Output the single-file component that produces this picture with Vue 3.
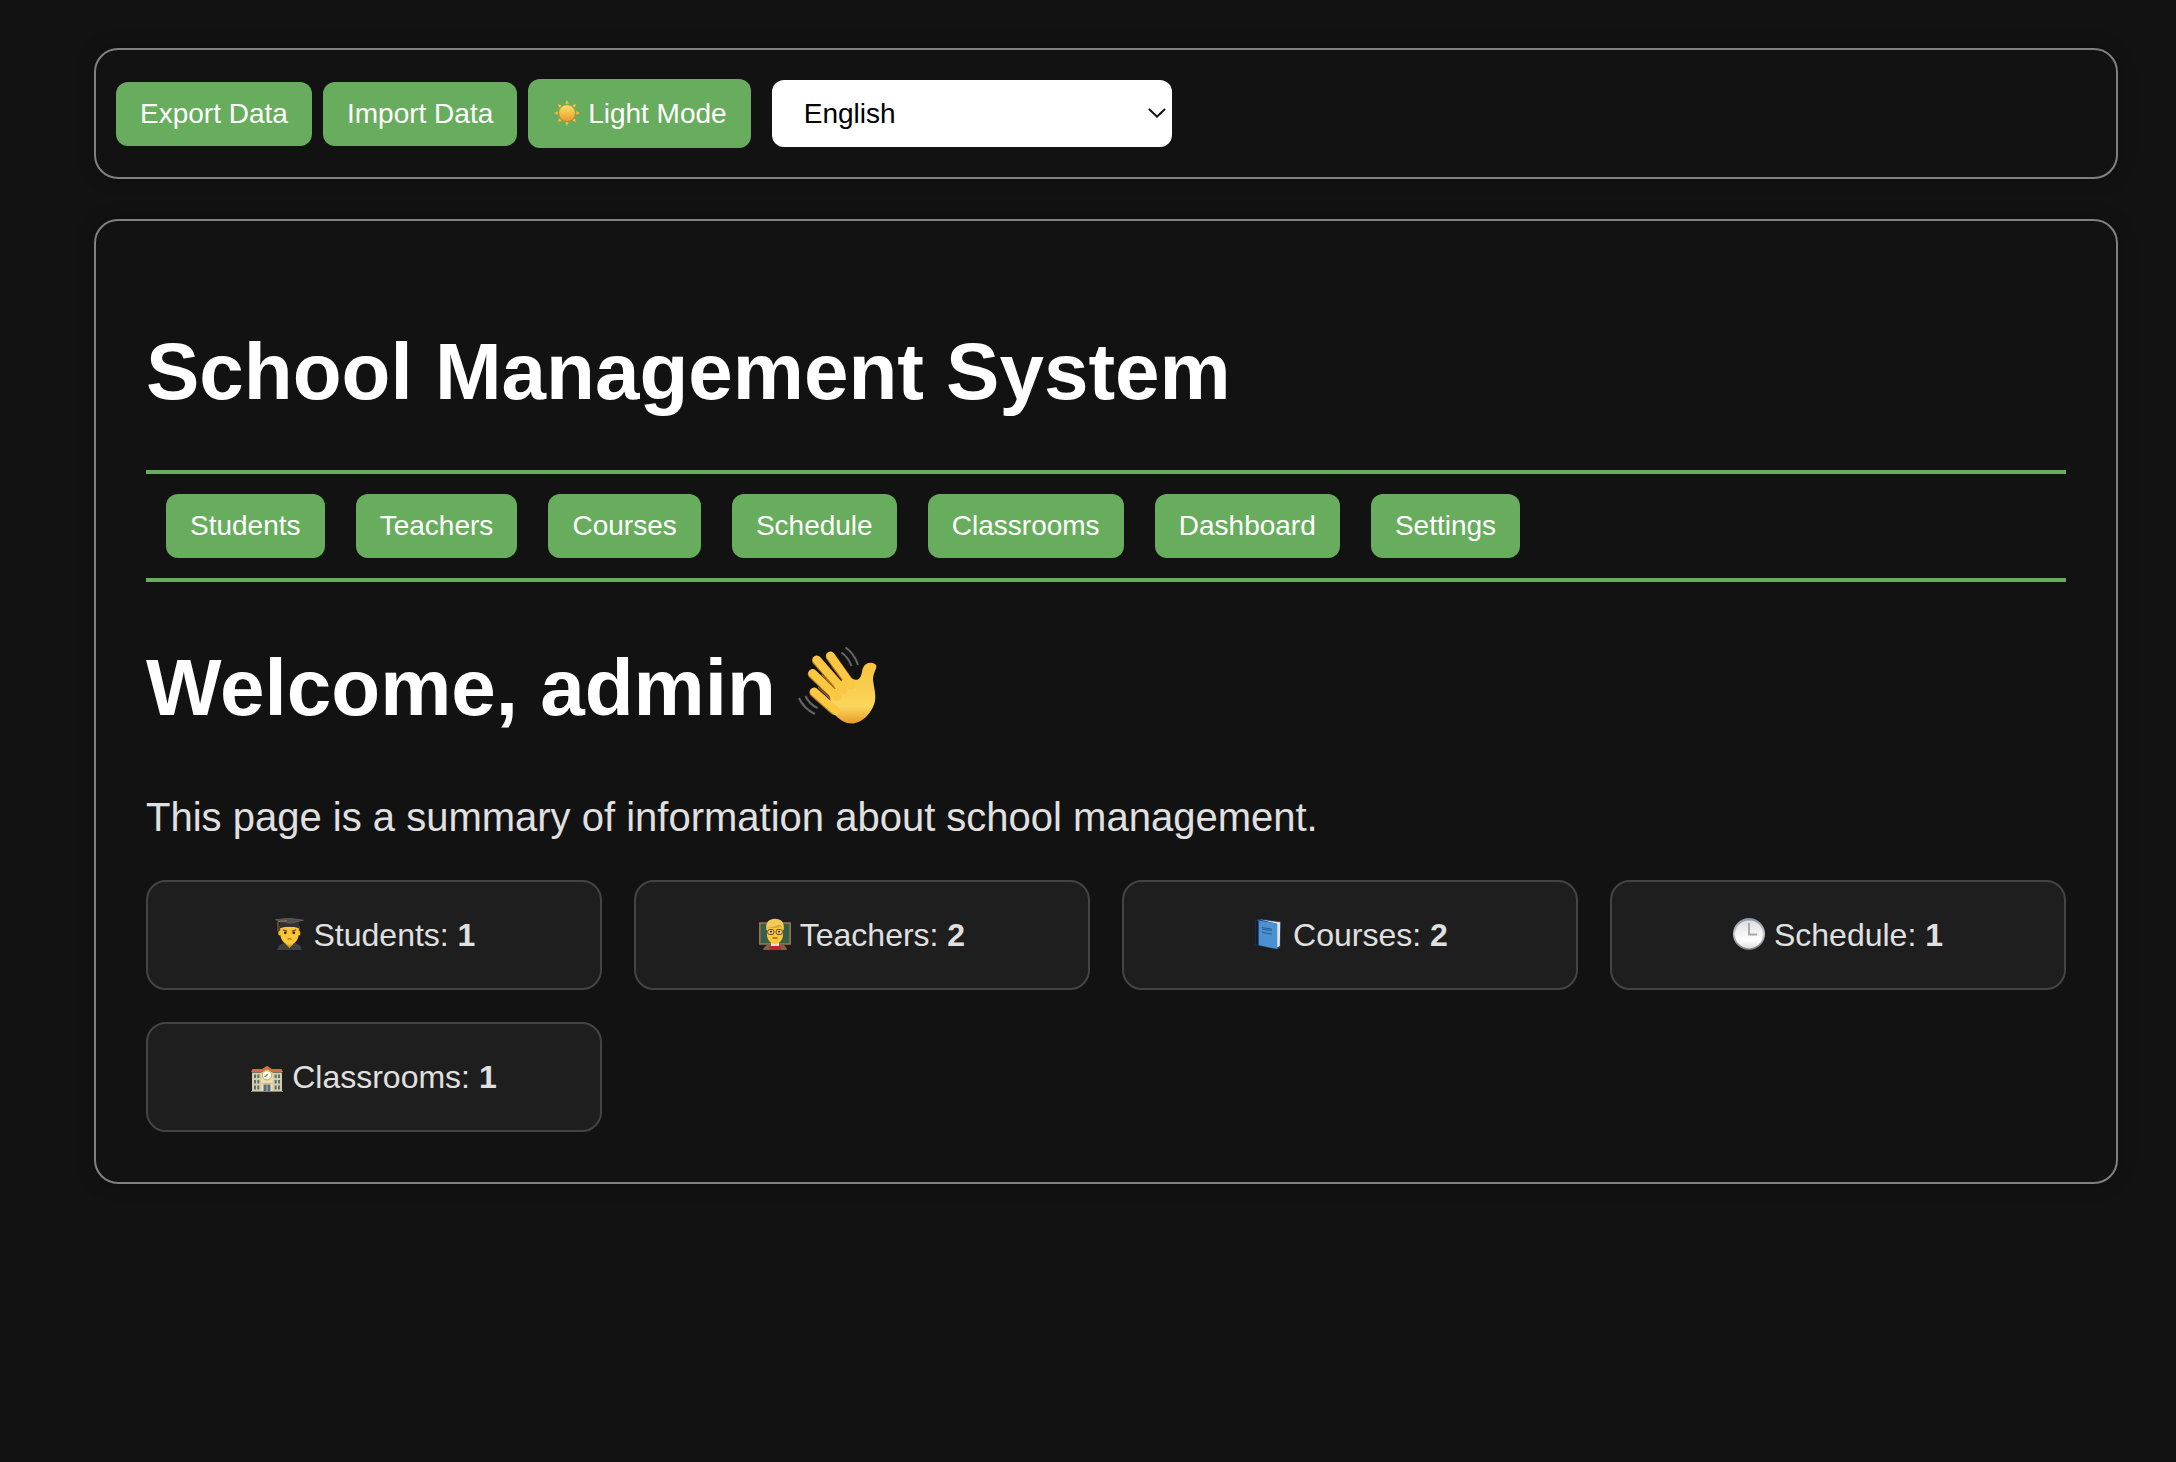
<script setup>
import { ref } from 'vue'

const language = ref('en')
const navItems = ['Students', 'Teachers', 'Courses', 'Schedule', 'Classrooms', 'Dashboard', 'Settings']
const stats = [
  { icon: 'student', label: 'Students', count: 1 },
  { icon: 'teacher', label: 'Teachers', count: 2 },
  { icon: 'book', label: 'Courses', count: 2 },
  { icon: 'clock', label: 'Schedule', count: 1 },
  { icon: 'school', label: 'Classrooms', count: 1 },
]
const rays = [0, 45, 90, 135, 180, 225, 270, 315]
</script>

<template>
  <div class="page">
    <header class="panel toolbar">
      <button class="btn">Export Data</button>
      <button class="btn">Import Data</button>
      <button class="btn theme">
        <svg class="sun" viewBox="0 0 28 28">
          <defs>
            <linearGradient id="sunFill" x1="0" y1="0" x2="0" y2="1">
              <stop offset="0" stop-color="#fbe36a" />
              <stop offset="1" stop-color="#ee9a2b" />
            </linearGradient>
          </defs>
          <path v-for="r in rays" :key="r" d="M14 .8L15.9 4.9H12.1Z" :transform="`rotate(${r} 14 14)`" fill="#f5c650" stroke="#b98a35" stroke-width=".4" />
          <circle cx="14" cy="14" r="8.1" fill="url(#sunFill)" stroke="#d39a32" stroke-width=".6" />
        </svg>
        <span>Light Mode</span>
      </button>
      <div class="picker">
        <select v-model="language">
          <option value="en">English</option>
        </select>
        <svg class="chevron" viewBox="0 0 18 10"><path d="M1 1L9 8.6L17 1" fill="none" stroke="#111" stroke-width="2" /></svg>
      </div>
    </header>

    <main class="panel content">
      <h1 class="title">School Management System</h1>
      <nav class="nav">
        <button v-for="item in navItems" :key="item" class="btn">{{ item }}</button>
      </nav>
      <h1 class="welcome">
        <span>Welcome, admin</span>
        <svg class="wave" viewBox="0 0 80 80">
          <defs>
            <linearGradient id="handFill" x1="0" y1="0" x2="0" y2="1">
              <stop offset="0" stop-color="#f9c33c" />
              <stop offset=".72" stop-color="#fbd65c" />
              <stop offset="1" stop-color="#e89b28" />
            </linearGradient>
          </defs>
          <g stroke="#bd7e18" stroke-width="9.6" stroke-linecap="round">
            <path d="M32.5 9.5L53 38" /><path d="M18.8 13.5L44 42" /><path d="M14.6 27L38 49" /><path d="M16.2 45.5L36 63" />
          </g>
          <path d="M31 44L43 34L48 31L54 31.5C60 35 63 31 64 25C65 16 72 14 77 17C81 20 75 24 75 33C76 41 78 46 77 54C74 67 63 76.5 54 76.5C46 76.5 41 72 34 65Z" fill="url(#handFill)" />
          <g stroke="#fac842" stroke-width="8.2" stroke-linecap="round">
            <path d="M32.5 8.8L53 38" /><path d="M18.8 12.8L45 43" /><path d="M14.6 26.3L39 50" /><path d="M16.2 44.8L38 64" />
          </g>
          <path d="M34 19.5L44 32.5M24 28L37 41.5M20.5 40.5L32 51.5" fill="none" stroke="#a76b17" stroke-width="1.1" stroke-linecap="round" />
          <g fill="none" stroke="#666" stroke-width="2">
            <path d="M47.5 .5Q56 6 60 18" /><path d="M43.5 5.5Q50 10 53.5 19" /><path d="M1 51Q6 62 17 67" /><path d="M7.5 49Q11 57 19.5 61" />
          </g>
        </svg>
      </h1>
      <p class="summary">This page is a summary of information about school management.</p>

      <section class="stats">
        <div v-for="s in stats" :key="s.label" class="stat">
          <svg v-if="s.icon === 'student'" class="emoji" viewBox="0 0 32 32">
            <path d="M4.5 32C4.5 27.5 8 25.5 13 24.5H20C25 25.5 28.5 27.5 28.5 32Z" fill="#3f4042" />
            <path d="M13 22H20V26.5L16.5 30L13 26.5Z" fill="#dc9c20" />
            <path d="M6.5 8H26.5V16H6.5Z" fill="#8d5b24" />
            <ellipse cx="6.8" cy="15" rx="1.6" ry="2.6" fill="#eeb431" /><ellipse cx="26" cy="15" rx="1.4" ry="2.6" fill="#eeb431" />
            <path d="M7.3 9H25.7V16C25.7 22 21 26.8 16.6 26.8C12 26.8 7.3 22 7.3 16Z" fill="#fbc637" />
            <path d="M9.8 11.8L14.2 13.2M23.2 11.8L18.8 13.2" stroke="#654217" stroke-width="1.2" />
            <circle cx="12.3" cy="14.8" r="1.4" fill="#30220f" /><circle cx="20.8" cy="14.8" r="1.4" fill="#30220f" />
            <path d="M14.6 21.4Q16.6 20 18.6 21.4" fill="none" stroke="#985e16" stroke-width="1.1" />
            <path d="M7 4H26V10.2Q16.5 7.4 7 10.2Z" fill="#303132" />
            <path d="M2.5 1.8L16 .2L30.5 2.2L17.5 5.2Z" fill="#4c4d4e" stroke="#808080" stroke-width=".5" />
            <path d="M14 2.6L5 3.6V13" fill="none" stroke="#a47c36" stroke-width=".9" />
          </svg>
          <svg v-else-if="s.icon === 'teacher'" class="emoji" viewBox="0 0 32 32">
            <rect x=".8" y="5" width="30.4" height="21" fill="#345f4c" stroke="#a97b4a" stroke-width="1.4" />
            <path d="M4 32C5 27.5 10 26 13 25.5H19C24 26 27 27.5 28 32Z" fill="#7b6548" />
            <path d="M12 23H20V29H12Z" fill="#e5dfd4" />
            <path d="M7.3 12C6.3 4 10 .8 16 .8C22 .8 25.7 4 24.7 12Z" fill="#f1ca59" />
            <path d="M8 9H24V17C24 22 20 26 16 26C12 26 8 22 8 17Z" fill="#fbc637" />
            <path d="M8 9.6Q15 9 21 6.5L24 10L21.5 9Q15 11 8 9.6Z" fill="#d9a53a" />
            <rect x="8.7" y="11.5" width="6.2" height="5" rx="2" fill="#f4cf6c" stroke="#624119" />
            <rect x="17.1" y="11.5" width="6.2" height="5" rx="2" fill="#f4cf6c" stroke="#624119" />
            <circle cx="12" cy="13.8" r="1" fill="#30220f" /><circle cx="20" cy="13.8" r="1" fill="#30220f" />
            <path d="M13.5 20H18.5" stroke="#85500f" stroke-width="1.2" />
            <path d="M10.5 28H22V32H10.5Z" fill="#c32434" />
          </svg>
          <svg v-else-if="s.icon === 'book'" class="emoji" viewBox="0 0 32 32">
            <path d="M3.5 2.5L8 .8L29 3.5L28.5 29.5L25 31.5L3.5 27Z" fill="#20446f" />
            <path d="M8 1.6L28.2 4.2L27.8 28L25 29.5L24 5.5Z" fill="#e7e5dd" />
            <path d="M6.2 2.5L25.3 5.6V31L6.2 27Z" fill="#4a91d4" />
            <path d="M3.8 2.5L6.5 3V27.3L3.8 26.4Z" fill="#111b35" />
            <path d="M10 9.6L20 11M10 11.2L20 12.6M10 14.5L20 15.9" stroke="#245785" stroke-width=".9" />
          </svg>
          <svg v-else-if="s.icon === 'clock'" class="emoji" viewBox="0 0 32 32">
            <defs>
              <linearGradient id="rim" x1="0" y1="0" x2="0" y2="1">
                <stop offset="0" stop-color="#8995a8" /><stop offset=".5" stop-color="#c9cacc" /><stop offset="1" stop-color="#777" />
              </linearGradient>
              <linearGradient id="dial" x1="0" y1="0" x2="0" y2="1">
                <stop offset="0" stop-color="#dedede" /><stop offset=".7" stop-color="#fff" /><stop offset="1" stop-color="#ddd" />
              </linearGradient>
            </defs>
            <circle cx="16" cy="16" r="16" fill="url(#rim)" />
            <circle cx="16" cy="16.4" r="14" fill="url(#dial)" />
            <path d="M16 5V16.5H24" fill="none" stroke="#aaa" stroke-width="2" />
          </svg>
          <svg v-else class="emoji" viewBox="0 0 32 32">
            <g transform="translate(0 4.5)">
              <path d="M1 8H31V27H1Z" fill="#d9cda0" />
              <path d="M10.5 8L16 4L21.5 8V27H10.5Z" fill="#eee2b6" />
              <path d="M1.5 4.5H11L16 1.2L21 4.5H30.5L32 7.5H21L16 5L11 7.5H0Z" fill="#d66a4b" />
              <g fill="#526f88">
                <path d="M3 10H5V13.5H3ZM6.3 10H8.3V13.5H6.3ZM3 15.5H5V19H3ZM6.3 15.5H8.3V19H6.3ZM3 21H5V25H3ZM6.3 21H8.3V25H6.3Z" />
                <path d="M23.7 10H25.7V13.5H23.7ZM27 10H29V13.5H27ZM23.7 15.5H25.7V19H23.7ZM27 15.5H29V19H27ZM23.7 21H25.7V25H23.7ZM27 21H29V25H27Z" />
                <path d="M12.5 20H19.5V27H12.5Z" />
              </g>
              <path d="M16 20V27M10.5 18.8H21.5" stroke="#c8b782" stroke-width="1" />
              <circle cx="16" cy="10.8" r="4.7" fill="#fafaf2" stroke="#cdb756" stroke-width="1.3" />
              <path d="M16.3 9.5L15.8 11.3L13.5 12" fill="none" stroke="#555" stroke-width="1" />
              <path d="M0 27H32" stroke="#8b825f" stroke-width="1" />
            </g>
          </svg>
          <span>{{ s.label }}: <strong>{{ s.count }}</strong></span>
        </div>
      </section>
    </main>
  </div>
</template>

<style>
body {
  background: #121212;
}
</style>

<style scoped>
.page {
  box-sizing: border-box;
  min-height: 1462px;
  padding: 48px 58px 0 94px;
  background: #121212;
  color: #e0e0e0;
  font-family: "Liberation Sans", Arial, Helvetica, sans-serif;
  font-size: 40px;
}

.panel {
  box-sizing: border-box;
  border: 2px solid #808080;
  border-radius: 24px;
  box-shadow: 0 0 20px rgba(0, 0, 0, 0.2);
}

.toolbar {
  display: flex;
  align-items: center;
  gap: 11.1px;
  height: 131px;
  padding: 1px 20px 0;
}

.btn {
  height: 64px;
  padding: 0 24px;
  border: 0;
  border-radius: 12px;
  background: #68ad5d;
  color: #fff;
  font: 28px/32px "Liberation Sans", Arial, sans-serif;
  white-space: nowrap;
}

.theme {
  display: flex;
  align-items: center;
  gap: 7.8px;
  height: 69px;
  margin-bottom: 1px;
}

.sun {
  width: 28px;
  height: 28px;
  margin: -2px -1px 0 1px;
}

.picker {
  position: relative;
  width: 400px;
  height: 67px;
  margin: 0 0 1px 10px;
}

.picker select {
  display: block;
  width: 100%;
  height: 100%;
  padding: 0 32px 0 32px;
  border: 0;
  border-radius: 12px;
  background: #fff;
  color: #000;
  font: 28px "Liberation Sans", Arial, sans-serif;
  appearance: none;
}

.chevron {
  position: absolute;
  top: 28px;
  right: 6px;
  width: 18px;
  height: 10px;
}

.content {
  height: 965px;
  margin-top: 40px;
  padding: 50px;
}

.title,
.welcome {
  margin: 0;
  color: #fff;
  font-size: 80px;
  font-weight: bold;
  line-height: 92px;
}

.title {
  padding-top: 55px;
}

.nav {
  display: flex;
  gap: 31.17px;
  margin-top: 52px;
  padding: 20px;
  border: solid #68ad5d;
  border-width: 4px 0;
}

.welcome {
  display: flex;
  align-items: center;
  gap: 22px;
  margin-top: 60px;
}

.wave {
  width: 80px;
  height: 80px;
  margin-top: -3px;
}

.summary {
  margin: 60px 0 0;
  line-height: 46px;
}

.stats {
  display: grid;
  grid-template-columns: repeat(4, 1fr);
  gap: 32px;
  margin-top: 40px;
}

.stat {
  display: flex;
  align-items: center;
  justify-content: center;
  gap: 8.9px;
  box-sizing: border-box;
  height: 110px;
  border: 2px solid #444;
  border-radius: 20px;
  background: #1e1e1e;
  font-size: 32px;
  line-height: 36px;
}

.emoji {
  width: 32px;
  height: 32px;
  margin-top: -2px;
}
</style>
